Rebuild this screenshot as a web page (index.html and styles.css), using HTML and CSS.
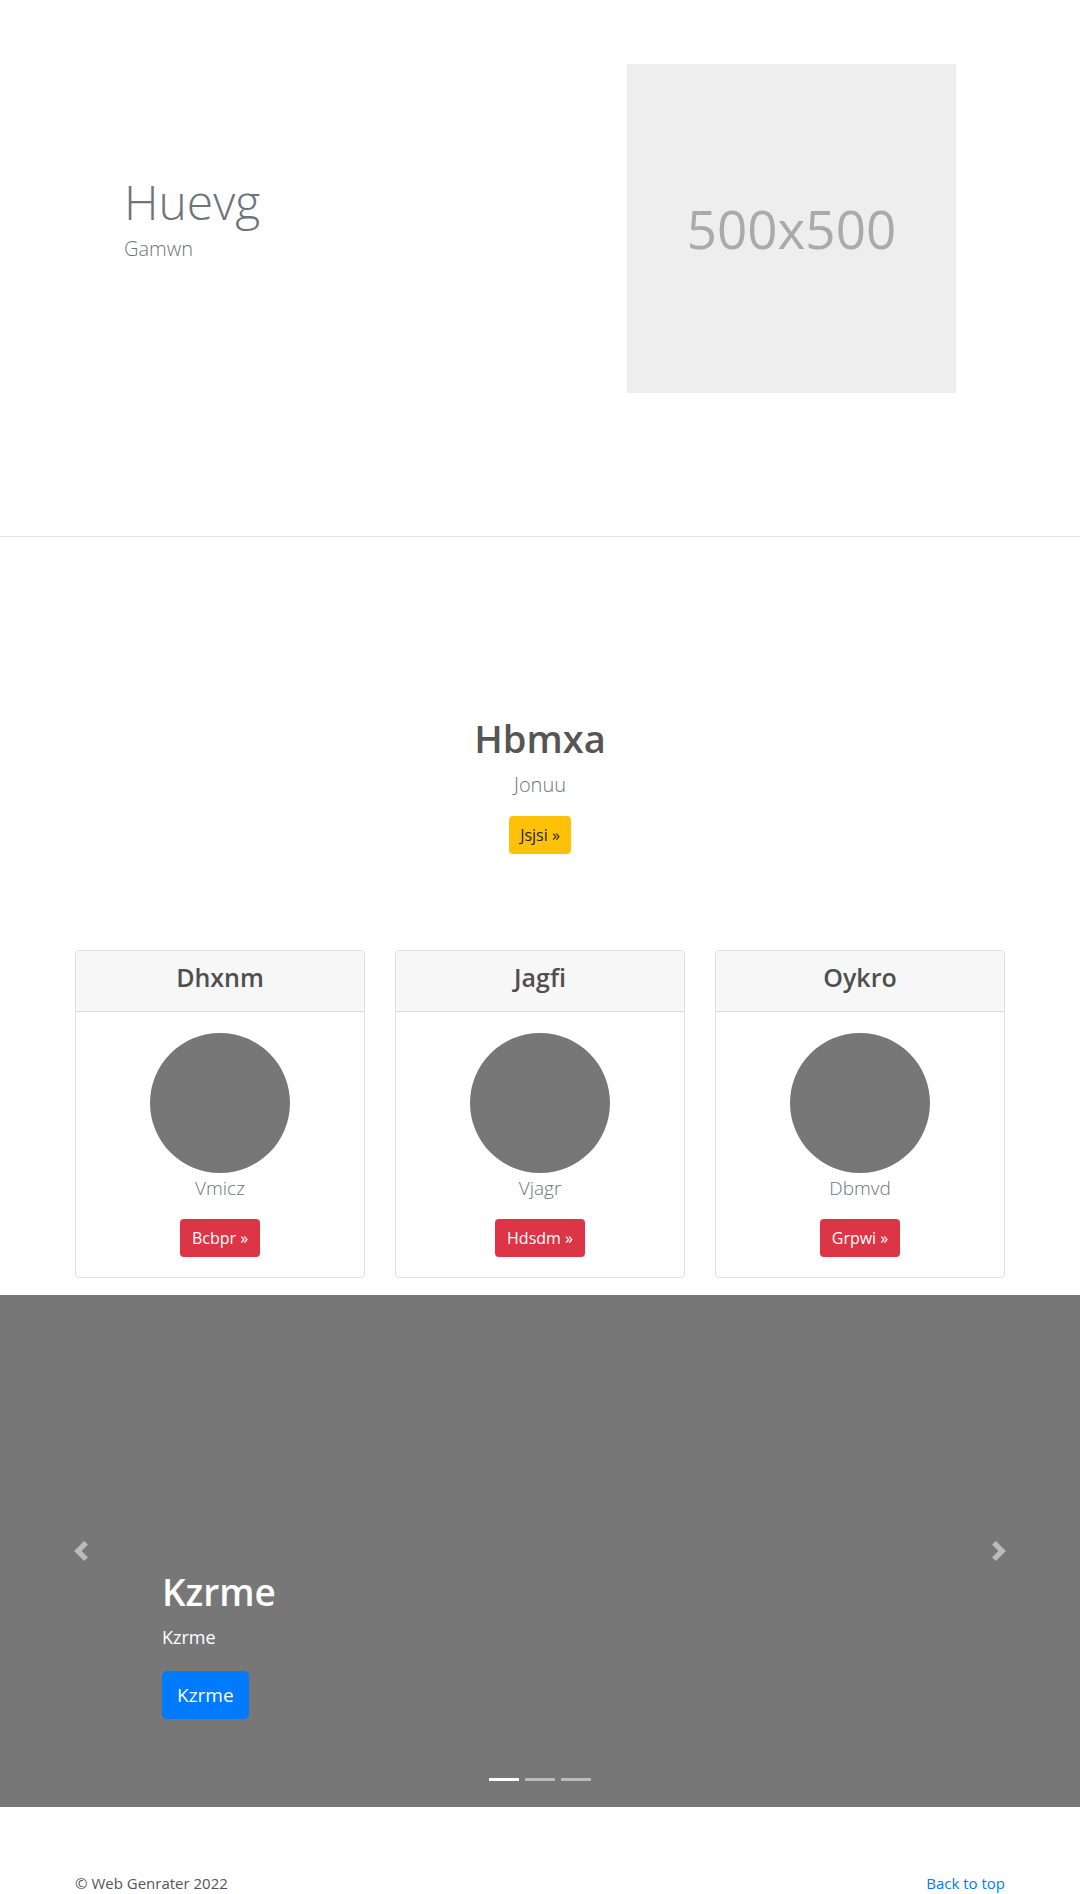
FILE: index.html
```html
<!DOCTYPE html>
<html lang="en">
<head>
<meta charset="utf-8">
<title>Huevg</title>
<link rel="stylesheet" href="styles.css">
</head>
<body>
<section class="hero">
  <div class="hero-text">
    <h1 class="hero-title">Huevg</h1>
    <p class="hero-lead">Gamwn</p>
  </div>
  <div class="hero-img"><span>500x500</span></div>
</section>

<section class="intro">
  <h2 class="intro-title">Hbmxa</h2>
  <p class="intro-lead">Jonuu</p>
  <a class="btn btn-warning" href="#">Jsjsi &raquo;</a>
</section>

<section class="cards">
  <div class="card">
    <div class="card-header"><h3>Dhxnm</h3></div>
    <div class="card-body">
      <div class="avatar"></div>
      <p class="card-lead">Vmicz</p>
      <a class="btn btn-danger" href="#">Bcbpr &raquo;</a>
    </div>
  </div>
  <div class="card">
    <div class="card-header"><h3>Jagfi</h3></div>
    <div class="card-body">
      <div class="avatar"></div>
      <p class="card-lead">Vjagr</p>
      <a class="btn btn-danger" href="#">Hdsdm &raquo;</a>
    </div>
  </div>
  <div class="card">
    <div class="card-header"><h3>Oykro</h3></div>
    <div class="card-body">
      <div class="avatar"></div>
      <p class="card-lead">Dbmvd</p>
      <a class="btn btn-danger" href="#">Grpwi &raquo;</a>
    </div>
  </div>
</section>

<section class="carousel">
  <div class="caption">
    <h2 class="caption-title">Kzrme</h2>
    <p class="caption-text">Kzrme</p>
    <a class="btn btn-primary btn-lg" href="#">Kzrme</a>
  </div>
  <a class="control control-prev" href="#" aria-label="Previous">
    <svg width="20" height="20" viewBox="0 0 8 8"><path fill="#fff" d="M5.25 0l-4 4 4 4 1.5-1.5-2.5-2.5 2.5-2.5-1.5-1.5z"/></svg>
  </a>
  <a class="control control-next" href="#" aria-label="Next">
    <svg width="20" height="20" viewBox="0 0 8 8"><path fill="#fff" d="M2.75 0l-1.5 1.5 2.5 2.5-2.5 2.5 1.5 1.5 4-4-4-4z"/></svg>
  </a>
  <ol class="indicators">
    <li class="active"></li>
    <li></li>
    <li></li>
  </ol>
</section>

<footer class="footer">
  <p>&copy; Web Genrater 2022</p>
  <a href="#">Back to top</a>
</footer>
</body>
</html>
```

FILE: styles.css
```css
* { box-sizing: border-box; }

html, body {
  margin: 0;
  padding: 0;
}

body {
  width: 1080px;
  font-family: "Open Sans", "Noto Sans", "Liberation Sans", sans-serif;
  font-size: 16px;
  line-height: 1.5;
  color: #212529;
  background: #fff;
}

h1, h2, h3, p { margin: 0; }

a { text-decoration: none; }

/* ---------- hero ---------- */
.hero {
  height: 537px;
  border-bottom: 1px solid #e5e5e5;
  display: flex;
  align-items: flex-start;
  justify-content: space-between;
  padding: 64px 124px 0 124px;
}

.hero-text {
  height: 329px;
  display: flex;
  flex-direction: column;
  justify-content: center;
  padding-bottom: 20px;
}

.hero-title {
  font-size: 48px;
  font-weight: 300;
  line-height: 1.2;
  color: #6c757d;
  margin-bottom: 4px;
}

.hero-lead {
  font-size: 20px;
  font-weight: 300;
  line-height: 1.5;
  color: #6c757d;
}

.hero-img {
  width: 329px;
  height: 329px;
  background: #eeeeee;
  display: flex;
  align-items: center;
  justify-content: center;
}

.hero-img span {
  font-size: 53px;
  color: #aaaaaa;
  line-height: 1;
}

/* ---------- intro ---------- */
.intro {
  padding-top: 177px;
  text-align: center;
}

.intro-title {
  font-size: 38px;
  font-weight: 600;
  line-height: 48px;
  color: #555555;
  margin-bottom: 8px;
}

.intro-lead {
  font-size: 20px;
  font-weight: 300;
  line-height: 1.5;
  color: #6c757d;
  margin-bottom: 16px;
}

/* ---------- buttons ---------- */
.btn {
  display: inline-block;
  font-size: 16px;
  line-height: 24px;
  padding: 7px 11px;
  border-radius: 4px;
  vertical-align: top;
}

.btn-warning { background: #ffc107; color: #212529; }
.btn-danger { background: #dc3545; color: #fff; padding: 7px 12px; }
.btn-primary { background: #007bff; color: #fff; }

.btn-lg {
  font-size: 19px;
  line-height: 30px;
  padding: 9px 15px;
  border-radius: 5px;
}

/* ---------- cards ---------- */
.cards {
  display: flex;
  gap: 30px;
  padding: 0 75px;
  margin-top: 96px;
}

.card {
  flex: 1;
  border: 1px solid #dfdfdf;
  border-radius: 4px;
  overflow: hidden;
}

.card-header {
  background: #f7f7f7;
  border-bottom: 1px solid #dfdfdf;
  text-align: center;
  padding: 8px 0 16px;
}

.card-header h3 {
  font-size: 25px;
  font-weight: 600;
  line-height: 36px;
  color: #4f4f4f;
}

.card-body {
  padding: 21px 20px 20px;
  text-align: center;
}

.avatar {
  width: 140px;
  height: 140px;
  border-radius: 50%;
  background: #777777;
  margin: 0 auto;
}

.card-lead {
  font-size: 19px;
  font-weight: 300;
  line-height: 30px;
  color: #6c757d;
  margin-bottom: 16px;
}

/* ---------- carousel ---------- */
.carousel {
  position: relative;
  margin-top: 17px;
  height: 512px;
  background: #777777;
  display: flex;
  align-items: flex-end;
  padding: 0 0 88px 162px;
}

.caption { color: #fff; }

.caption-title {
  font-size: 37px;
  font-weight: 600;
  line-height: 48px;
  margin-bottom: 8px;
}

.caption-text {
  font-size: 18px;
  font-weight: 500;
  line-height: 26px;
  margin-bottom: 21px;
}

.control {
  position: absolute;
  top: 246px;
  width: 20px;
  height: 20px;
  opacity: 0.5;
}

.control svg { display: block; }

.control-prev { left: 71px; }
.control-next { right: 71px; }

.indicators {
  position: absolute;
  left: 0;
  right: 0;
  bottom: 26px;
  margin: 0;
  padding: 0;
  list-style: none;
  display: flex;
  justify-content: center;
  gap: 6px;
}

.indicators li {
  width: 30px;
  height: 3px;
  background: rgba(255, 255, 255, 0.5);
}

.indicators li.active { background: #fff; }

/* ---------- footer ---------- */
.footer {
  display: flex;
  justify-content: space-between;
  padding: 64px 75px 0;
  font-size: 15px;
  line-height: 24px;
}

.footer p { color: #555555; }
.footer a { color: #007bff; }
```
